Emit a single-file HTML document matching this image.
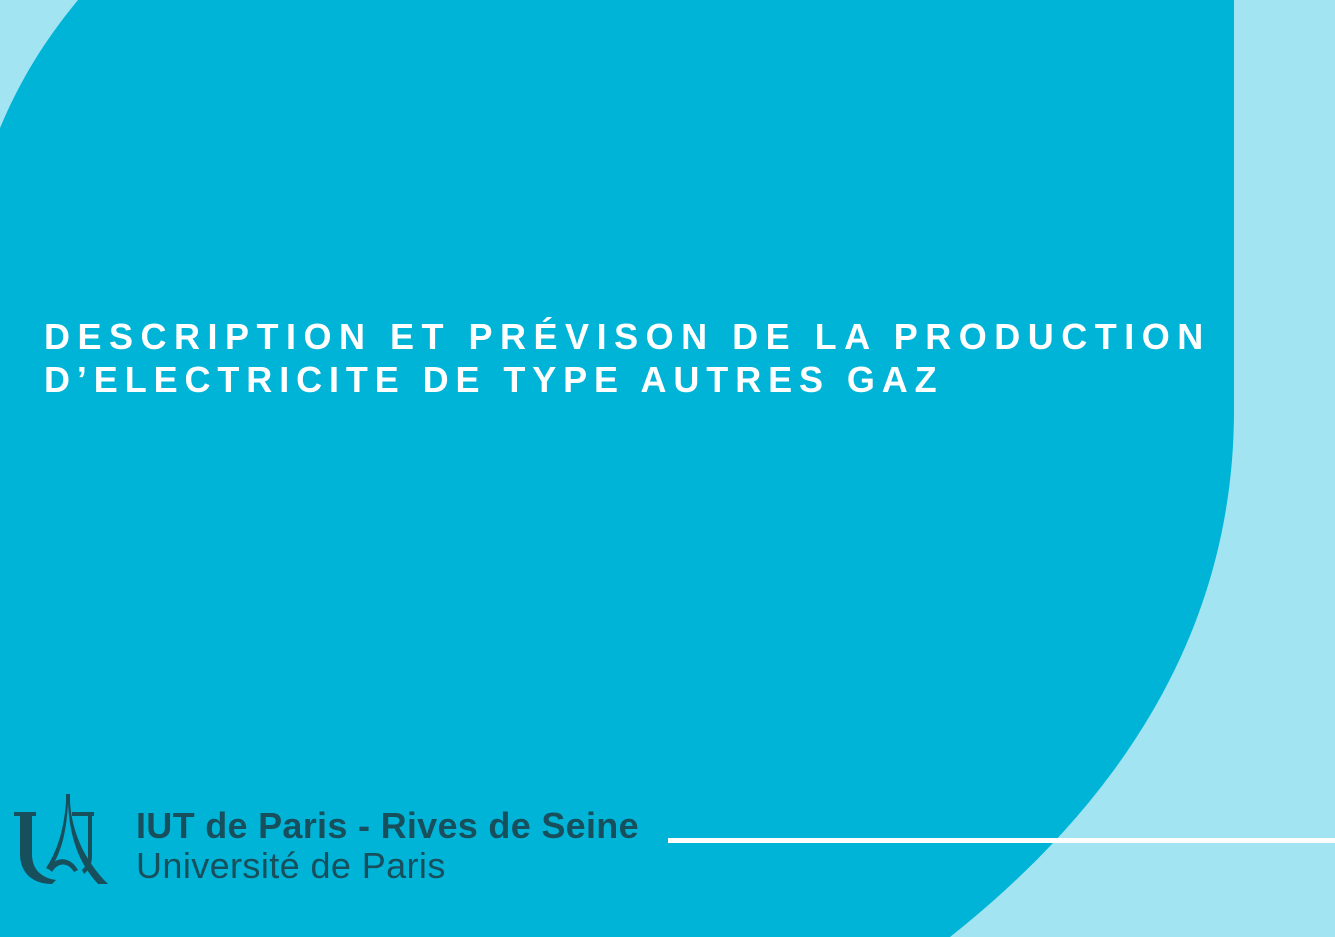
<!DOCTYPE html>
<html><head><meta charset="utf-8"><style>
html,body{margin:0;padding:0;}
body{width:1335px;height:937px;position:relative;overflow:hidden;background:#a2e4f2;font-family:"Liberation Sans",sans-serif;}
svg.bg{position:absolute;left:0;top:0;}
.title{position:absolute;left:44px;top:315px;color:#fff;font-weight:bold;font-size:36px;letter-spacing:7.5px;line-height:43px;white-space:nowrap;}
.title span{letter-spacing:6.9px;}
.line{position:absolute;left:668px;top:838px;width:667px;height:5px;background:#fff;}
.t1{position:absolute;left:136px;top:805px;color:#174f5c;font-weight:bold;font-size:36px;letter-spacing:0.3px;white-space:nowrap;}
.t2{position:absolute;left:136px;top:845px;color:#174f5c;font-size:36px;letter-spacing:0.4px;white-space:nowrap;}
</style></head><body>
<svg class="bg" width="1335" height="937"><path d="M78,0 L1234,0 L1234,410 C1234,640 1110,810 950,937 L0,937 L0,128 C20,80 45,40 78,0 Z" fill="#00b4d8"/></svg>
<div class="title">DESCRIPTION ET PRÉVISON DE LA PRODUCTION<br><span>D’ELECTRICITE DE TYPE AUTRES GAZ</span></div>
<div class="line"></div>
<svg style="position:absolute;left:12px;top:792px" width="100" height="95" viewBox="0 0 100 95">
<g fill="#174f5c">
<rect x="2" y="20" width="22" height="4"/>
<path d="M8,22 L20,22 L20,62 C20,78 30,86 44,88 L40,92 C22,92 8,82 8,62 Z"/>
<rect x="60" y="20" width="22" height="4"/>
<path d="M76,22 L80,22 L80,64 C80,72 77,78 72,82 L70,78 C74,74 76,70 76,64 Z"/>
<path d="M54,2 L58,2 L58,10 C60,40 72,68 96,92 L86,92 C66,70 58,45 56,12 C54,45 48,62 38,78 L34,76 C46,58 52,36 54,10 Z"/>
<path d="M36,76 C44,64 58,64 66,78 L62,80 C56,70 46,70 40,80 Z"/>
</g></svg>
<div class="t1">IUT de Paris - Rives de Seine</div>
<div class="t2">Université de Paris</div>
</body></html>
